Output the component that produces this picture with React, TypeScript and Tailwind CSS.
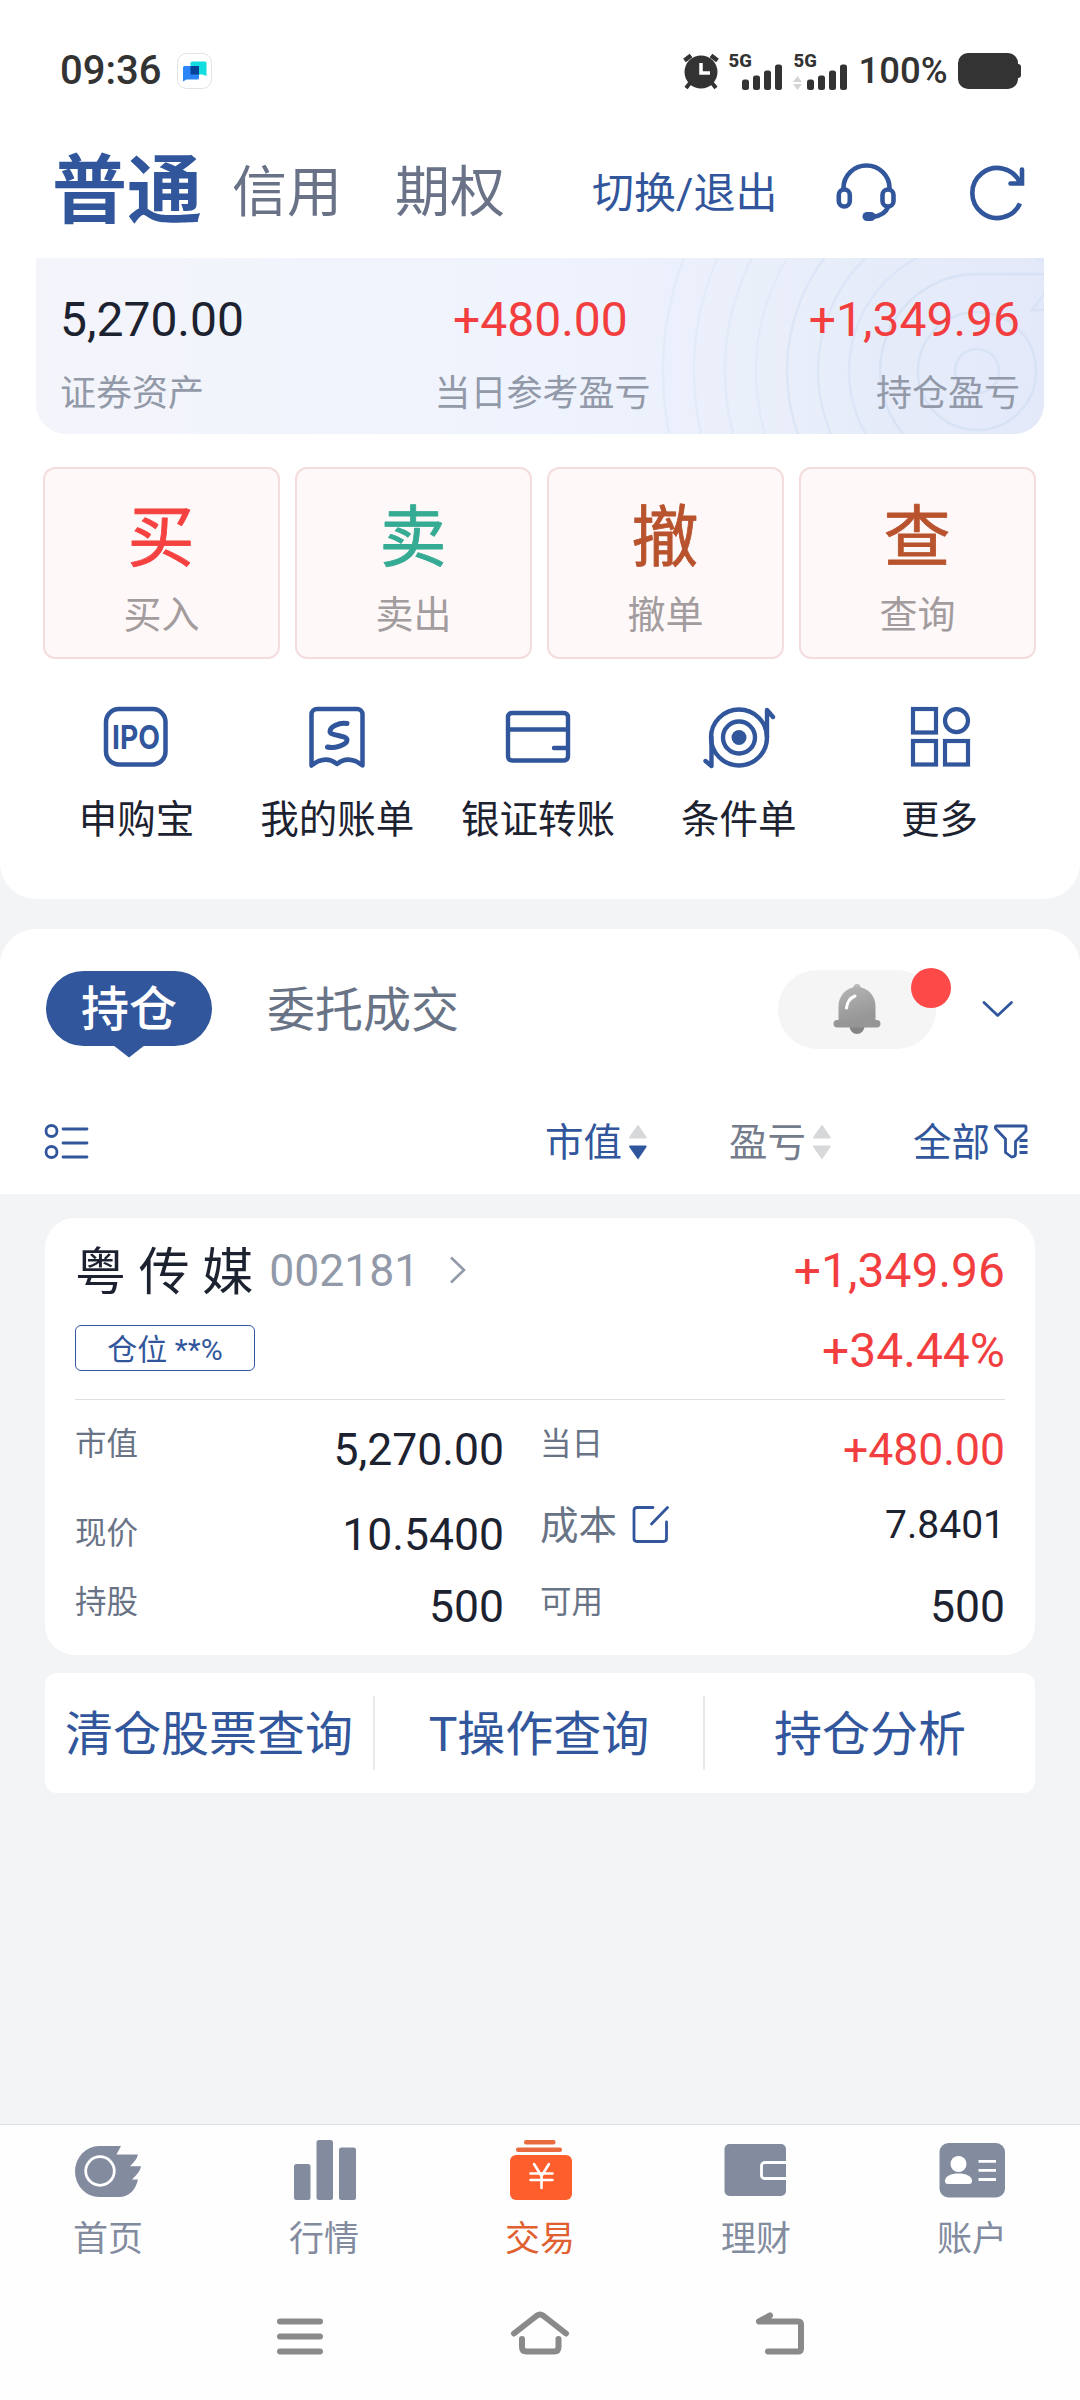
import { ReactNode } from 'react';

const BLUE = '#31569c';

interface Action {
  glyph: string;
  label: string;
  color: string;
}

const actions: Action[] = [
  { glyph: '买', label: '买入', color: '#f5413f' },
  { glyph: '卖', label: '卖出', color: '#35ab93' },
  { glyph: '撤', label: '撤单', color: '#b8532d' },
  { glyph: '查', label: '查询', color: '#b8532d' },
];

const shortcuts = [
  { label: '申购宝', icon: <IpoIcon /> },
  { label: '我的账单', icon: <BillIcon /> },
  { label: '银证转账', icon: <TransferIcon /> },
  { label: '条件单', icon: <TargetIcon /> },
  { label: '更多', icon: <MoreIcon /> },
];

const tabs = [
  { label: '首页', icon: <HomeTabIcon /> },
  { label: '行情', icon: <QuotesTabIcon /> },
  { label: '交易', icon: <TradeTabIcon />, active: true },
  { label: '理财', icon: <WalletTabIcon /> },
  { label: '账户', icon: <AccountTabIcon /> },
];

/* ---------- icons ---------- */

function IpoIcon() {
  return (
    <svg width="72" height="66" viewBox="0 0 72 66">
      <rect x="6" y="6" width="59.500" height="55.500" rx="13" fill="none" stroke={BLUE} strokeWidth="4.500" />
      <text x="36" y="45.500" textAnchor="middle" fontSize="33" fontWeight="700" textLength="48" lengthAdjust="spacingAndGlyphs" fill={BLUE} fontFamily="Inter, sans-serif">IPO</text>
    </svg>
  );
}

function BillIcon() {
  return (
    <svg width="72" height="66" viewBox="0 0 72 66" fill="none" stroke={BLUE} strokeWidth="4.500" strokeLinejoin="round">
      <path d="M10.500 62.500V11.500a5.500 5.500 0 0 1 5.500-5.500h40a5.500 5.500 0 0 1 5.500 5.500v51q-14-11-25.500-1.500q-11.500-9.500-25.500 1.500z" />
      <path d="M46 20.500C38 19 29 24 29 28.500S46 32 46 37S33 46 26.500 44" strokeWidth="5" strokeLinecap="round" />
    </svg>
  );
}

function TransferIcon() {
  return (
    <svg width="72" height="66" viewBox="0 0 72 66" fill="none" stroke={BLUE} strokeWidth="4.400" strokeLinecap="round">
      <rect x="6" y="10" width="60" height="47.500" rx="4" />
      <path d="M6 26.500h60M52 45h14" />
    </svg>
  );
}

function TargetIcon() {
  return (
    <svg width="76" height="68" viewBox="0 0 76 68" className="-mb-[2px]" fill="none" stroke={BLUE} strokeWidth="4.400" strokeLinecap="round" strokeLinejoin="round">
      <circle cx="38" cy="34.500" r="28" />
      <circle cx="38" cy="34.500" r="16" />
      <circle cx="38" cy="34.500" r="7.500" fill={BLUE} stroke="none" />
      <path d="M66 34V7l6 7M10.500 34v29l-6-5" />
    </svg>
  );
}

function MoreIcon() {
  return (
    <svg width="72" height="66" viewBox="0 0 72 66" fill="none" stroke={BLUE} strokeWidth="4.200">
      <rect x="9" y="6" width="23" height="23.500" />
      <circle cx="52.500" cy="17.700" r="11.500" />
      <rect x="9" y="38" width="23" height="23.500" />
      <rect x="41" y="38" width="23" height="23.500" />
    </svg>
  );
}

function HomeTabIcon() {
  return (
    <svg width="72" height="64" viewBox="0 0 72 64" fill="#838b9e">
      <path d="M27 7H49L44.500 15.500H66C65 20 62 23 58 27.200H69C68 33 64 36 60 40.500H66C63.500 51 57 58 47 58H27A24 25.500 0 0 1 27 7z" />
      <circle cx="28" cy="32" r="14.300" fill="none" stroke="#fff" strokeWidth="2.800" />
    </svg>
  );
}

function QuotesTabIcon() {
  return (
    <svg width="72" height="64" viewBox="0 0 72 64" fill="#838b9e">
      <rect x="6" y="25" width="16.500" height="36" rx="2.500" />
      <rect x="28.500" y="1" width="16.500" height="60" rx="2.500" />
      <rect x="51" y="8.500" width="17" height="52.500" rx="2.500" />
    </svg>
  );
}

function TradeTabIcon() {
  return (
    <svg width="72" height="64" viewBox="0 0 72 64" fill="#fe5e2b">
      <rect x="20" y="1" width="31.500" height="4.500" rx="2" fill="#ea6a40" />
      <rect x="12" y="8.500" width="46" height="4.500" rx="2" fill="#ea6a40" />
      <rect x="6" y="16" width="62" height="45" rx="6" />
      <path d="M30 25l7.500 12L45 25M37.500 37v12M26.500 34.500h22M26.500 41h22" fill="none" stroke="#fff" strokeWidth="2.600" strokeLinecap="round" />
    </svg>
  );
}

function WalletTabIcon() {
  return (
    <svg width="72" height="64" viewBox="0 0 72 64">
      <rect x="4.500" y="5" width="61.500" height="52" rx="5" fill="#838b9e" />
      <path d="M67 23.500H44.500a3 3 0 0 0-3 3v10a3 3 0 0 0 3 3H67" fill="none" stroke="#fff" strokeWidth="2.800" />
    </svg>
  );
}

function AccountTabIcon() {
  return (
    <svg width="72" height="64" viewBox="0 0 72 64">
      <rect x="3.500" y="4" width="65.500" height="54.500" rx="9" fill="#838b9e" />
      <circle cx="22.500" cy="25" r="8" fill="#fff" />
      <path d="M9 42c0-5 6-7.500 13.500-7.500S36 37 36 42q0 3-3 3H12q-3 0-3-3z" fill="#fff" />
      <path d="M42.500 22.300H60M42.500 31.300H60M42.500 40.500H60" stroke="#fff" strokeWidth="2.800" />
    </svg>
  );
}

function SortArrows({ active = false }: { active?: boolean }) {
  return (
    <svg className="ml-[6px]" width="20" height="36" viewBox="0 0 20 36">
      <path d="M10 0.500L18.500 13q.5 1.500-.8 1.500H2q-1.300 0-.8-1.500z" fill="#d7d8da" />
      <path d="M10 35.500L18.500 23q.5-1.500-.8-1.500H2q-1.300 0-.8 1.500z" fill={active ? '#2f559d' : '#d7d8da'} />
    </svg>
  );
}

function SignalBars() {
  return (
    <svg width="41" height="26" viewBox="0 0 41 26" fill="#333">
      <rect x="0" y="15.500" width="7" height="10.500" rx="2.500" />
      <rect x="11" y="11.500" width="7" height="14.500" rx="2.500" />
      <rect x="22" y="6.500" width="7" height="19.500" rx="2.500" />
      <rect x="33" y="0.500" width="7" height="25.500" rx="2.500" />
    </svg>
  );
}

/* ---------- sections ---------- */

function StatusBar() {
  return (
    <div className="flex h-[142px] items-center pl-[60px] text-[#333]">
      <span className="text-[40px] leading-none font-medium">09:36</span>
      <svg className="ml-4" width="36" height="36" viewBox="0 0 36 36">
        <rect x="0.500" y="0.500" width="34" height="35" rx="9" fill="#fff" stroke="#e3e3e5" />
        <path d="M15 8.500h13a1.500 1.500 0 0 1 1.500 1.500v13l-4-1.500H15a1.500 1.500 0 0 1-1.500-1.500V10a1.500 1.500 0 0 1 1.500-1.500z" fill="#12dde0" />
        <path d="M7.500 13h13a1.500 1.500 0 0 1 1.500 1.500V25a1.500 1.500 0 0 1-1.500 1.500h-11l-3.500 2V14.500A1.500 1.500 0 0 1 7.500 13z" fill="#2a86f8" />
        <rect x="13.500" y="13" width="8.500" height="8.500" fill="#044299" />
      </svg>

      <svg className="ml-[469px]" width="38" height="38" viewBox="0 0 38 38" fill="none" stroke="#333">
        <circle cx="19" cy="20" r="16.500" fill="#333" stroke="none" />
        <path d="M2.500 8.500L9 3.500M35.500 8.500L29 3.500" strokeWidth="4.500" />
        <path d="M8 31l-4 5M30 31l4 5" strokeWidth="4" />
        <path d="M19 11v10h9" stroke="#fff" strokeWidth="3.500" />
      </svg>
      <div className="ml-[8px] flex h-[37px] flex-col">
        <span className="text-[18.500px] leading-[16px] font-extrabold">5G</span>
        <div className="-mt-[5px] ml-[14px]"><SignalBars /></div>
      </div>
      <div className="ml-[10px] flex h-[37px] flex-col">
        <span className="text-[18.500px] leading-[16px] font-extrabold">5G</span>
        <div className="-mt-[5px] flex items-end gap-[5px]">
          <svg width="9" height="14" viewBox="0 0 9 14" fill="#d4d4d4">
            <path d="M4.500 0L9 6H0zM4.500 14L9 8H0z" />
          </svg>
          <SignalBars />
        </div>
      </div>
      <span className="ml-[10px] text-[36.500px] leading-none font-medium">100%</span>
      <div className="ml-[10px] h-9 w-[60px] rounded-[10px] bg-[#333]" />
      <div className="h-[14px] w-[3px] rounded-r-[3px] bg-[#333]" />
    </div>
  );
}

function AccountHeader() {
  return (
    <header className="flex h-[116px] items-center pr-[53px] pb-[17px] pl-[52px]">
      <span className="text-[75px] leading-none font-bold text-[#31569c]">普通</span>
      <span className="ml-[30px] pt-[2px] text-[55px] leading-none text-[#697287]">信用</span>
      <span className="ml-[53px] pt-[2px] text-[55px] leading-none text-[#697287]">期权</span>
      <span className="ml-[87px] pt-1 text-[42px] leading-none whitespace-nowrap text-[#31569c]">切换/退出</span>
      <svg className="ml-auto shrink-0" width="62" height="62" viewBox="0 0 62 62" fill="none" stroke={BLUE} strokeWidth="4.600">
        <path d="M8.500 28.500V27a23 22.500 0 0 1 46 0v1.500" />
        <rect x="3.800" y="28.500" width="11" height="17" rx="5.500" />
        <rect x="47.500" y="28.500" width="11" height="17" rx="5.500" />
        <path d="M53 46c-2 6-7 8.500-15 10" />
        <rect x="27.500" y="51" width="13" height="9" rx="4.500" fill={BLUE} stroke="none" />
      </svg>
      <svg className="ml-[73px] shrink-0" width="57" height="60" viewBox="0 0 57 60" fill="none" stroke={BLUE} strokeWidth="4.600">
        <path d="M50 41.500A25 25 0 1 1 50 20.500" />
        <path d="M52 7.500V21.500H40.500" strokeLinecap="round" />
      </svg>
    </header>
  );
}

function AssetCard() {
  return (
    <section className="relative mx-9 h-44 overflow-hidden rounded-b-[30px] bg-gradient-to-r from-[#f4f5fb] via-[#eff3fd] to-[#e3e9f9]">
      <svg className="absolute inset-0" width="1008" height="176" viewBox="0 0 1008 176" fill="none" stroke="#d8e3f6" strokeWidth="2.500">
        <circle cx="941" cy="113" r="22" />
        <circle cx="941" cy="113" r="59" />
        <path d="M1008 16H941a97 97 0 0 0-70 164" />
        <path d="M1010 34l-14 18h14" />
        <g opacity="0.700">
          <circle cx="941" cy="113" r="128" />
          <circle cx="941" cy="113" r="159" />
          <circle cx="941" cy="113" r="190" />
        </g>
        <g opacity="0.400">
          <circle cx="941" cy="113" r="221" />
          <circle cx="941" cy="113" r="252" />
          <circle cx="941" cy="113" r="283" />
          <circle cx="941" cy="113" r="314" />
        </g>
      </svg>
      <div className="relative flex justify-between px-6 pt-[38px]">
        <div>
          <div className="text-5xl leading-[48px] text-[#1d2230]">5,270.00</div>
          <div className="mt-[32px] text-[36px] leading-9 text-[#9299a8]">证券资产</div>
        </div>
        <div className="ml-[32px] text-center">
          <div className="pr-1 text-5xl leading-[48px] text-[#f23e3f]">+480.00</div>
          <div className="mt-[32px] text-[36px] leading-9 text-[#9299a8]">当日参考盈亏</div>
        </div>
        <div className="text-right">
          <div className="text-5xl leading-[48px] text-[#f23e3f]">+1,349.96</div>
          <div className="mt-[32px] text-[36px] leading-9 text-[#9299a8]">持仓盈亏</div>
        </div>
      </div>
    </section>
  );
}

function ActionButtons() {
  return (
    <div className="mr-[44px] ml-[43px] mt-[33px] grid grid-cols-4 gap-[15px]">
      {actions.map((action) => (
        <button key={action.label} className="flex h-48 flex-col items-center rounded-xl border-2 border-[#f5dcdd] bg-[#fef8f8]">
          <svg className="mt-[28px] mr-[2px]" width="80" height="80" viewBox="0 0 80 80">
            <text
              x="40"
              y="64"
              textAnchor="middle"
              fontSize="67"
              fill={action.color}
              stroke={action.color}
              strokeWidth="0.800"
              strokeLinejoin="round"
              strokeLinecap="round"
            >
              {action.glyph}
            </text>
          </svg>
          <span className="mt-[18px] text-[38px] leading-[40px] text-[#a39c9e]">{action.label}</span>
        </button>
      ))}
    </div>
  );
}

function Shortcuts() {
  return (
    <div className="mr-[40px] ml-[36px] mt-[44px] grid grid-cols-5">
      {shortcuts.map((item) => (
        <div key={item.label} className="flex flex-col items-center">
          {item.icon}
          <span className="mt-[31px] text-[38.500px] leading-[40px] whitespace-nowrap text-[#1d2230]">{item.label}</span>
        </div>
      ))}
    </div>
  );
}

function PositionTabs() {
  return (
    <section className="mt-[30px] h-[265px] rounded-t-[36px] bg-white pt-[41px]">
      <div className="flex h-[78px] items-center pr-[66px] pl-[46px]">
        <div className="relative mb-[2px] flex h-[75px] w-[166px] items-center justify-center rounded-full bg-[#31569c] pt-[3px] text-5xl font-medium text-white">
          持仓
          <svg className="absolute top-[74px] left-[67px]" width="32" height="13" viewBox="0 0 32 13" fill={BLUE}>
            <path d="M0 0h32L16 12.500z" />
          </svg>
        </div>
        <span className="ml-[55px] pt-[3px] text-[48px] leading-none text-[#697386]">委托成交</span>
        <div className="relative ml-auto flex h-[79px] w-[158px] items-center justify-center rounded-full bg-[#f5f5f6]">
          <svg className="mr-[1px]" width="50" height="54" viewBox="0 0 50 54">
            <defs>
              <linearGradient id="bell" x1="0" y1="0" x2="0.300" y2="1">
                <stop offset="0" stopColor="#b4b4b4" />
                <stop offset="1" stopColor="#969696" />
              </linearGradient>
            </defs>
            <circle cx="25" cy="5.500" r="3.500" fill="#b9b9b9" />
            <circle cx="25" cy="44.500" r="7.500" fill="#858585" />
            <path d="M6.500 40.500V24a18.500 19 0 0 1 37 0v16.500z" fill="url(#bell)" />
            <rect x="1.500" y="38" width="47" height="7.500" rx="3.700" fill="#969696" />
            <path d="M14.500 26q1-9 8.500-12" fill="none" stroke="#fff" strokeWidth="3" strokeLinecap="round" />
          </svg>
          <div className="absolute -top-[2px] right-[-15px] size-10 rounded-full bg-[#fd4948]" />
        </div>
        <svg className="ml-[45px]" width="33" height="20" viewBox="0 0 33 20" fill="none" stroke={BLUE} strokeWidth="2.800" strokeLinecap="round" strokeLinejoin="round">
          <path d="M3 3.500l13.700 13L30.500 3.500" />
        </svg>
      </div>

      <div className="mt-[74px] flex h-10 items-center pr-[51px] pl-[44px] text-[38.500px] leading-none text-[#31569c]">
        <svg width="46" height="38" viewBox="0 0 46 38" fill="none" stroke={BLUE} strokeWidth="2.800" strokeLinecap="round">
          <circle cx="7.500" cy="8" r="5.500" />
          <circle cx="7.500" cy="29" r="5.500" />
          <path d="M19 6h24M19 20h24M19 34h24" />
        </svg>
        <span className="ml-[455px] pt-[3px]">市值</span>
        <SortArrows active />
        <span className="ml-[81px] pt-[3px] text-[#747b8a]">盈亏</span>
        <SortArrows />
        <span className="ml-auto pt-[3px]">全部</span>
        <svg className="ml-[3px] shrink-0" width="36" height="38" viewBox="0 0 36 38" fill="none" stroke={BLUE} strokeWidth="2.800" strokeLinejoin="round">
          <path d="M22.500 18.500L33 8V4q0-1-1-1H3.500q-1.500 0-1 2.500L12.500 16v13.500l6 4.500q4 0 4-3z" />
          <path d="M26.500 17.500h8M26.500 23.500h8M26.500 29.500h8" />
        </svg>
      </div>
    </section>
  );
}

interface CellProps {
  label: ReactNode;
  value: string;
  labelClass?: string;
  valueClass?: string;
}

function Cell({ label, value, labelClass = 'pb-[10px] text-[31.500px]', valueClass = 'text-[44.500px] text-[#1d2230]' }: CellProps) {
  return (
    <div className="flex items-center justify-between">
      <span className={`flex items-center leading-none text-[#697386] ${labelClass}`}>{label}</span>
      <span className={`leading-none ${valueClass}`}>{value}</span>
    </div>
  );
}

function HoldingCard() {
  return (
    <section className="mx-[45px] mt-6 h-[437px] rounded-[30px] bg-white px-[30px] pt-[17px]">
      <div className="flex h-[72px] items-center">
        <span className="pt-[2px] text-[51px] leading-none text-[#1d2230]">粤 传 媒</span>
        <span className="ml-[16px] text-[44.500px] leading-none text-[#9299a8]">002181</span>
        <svg className="mb-[2px] ml-[29px]" width="20" height="30" viewBox="0 0 20 30" fill="none" stroke="#9299a8" strokeWidth="2.600">
          <path d="M3 2.500L16 15 3 27.500" />
        </svg>
        <span className="ml-auto text-5xl leading-none text-[#f23e3f]">+1,349.96</span>
      </div>
      <div className="mt-[9px] flex h-[70px] items-center">
        <span className="mb-[6px] flex h-[46px] w-[180px] items-center justify-center rounded-md border border-[#31569c] pt-[3px] text-[30px] leading-none text-[#31569c]">仓位 **%</span>
        <span className="ml-auto text-5xl leading-none text-[#f23e3f]">+34.44%</span>
      </div>
      <div className="mt-[13px] h-px bg-[#dedfe2]" />
      <div className="grid grid-cols-[429px_465px] grid-rows-[84px_78px_75px] gap-x-[36px] pt-[8px]">
        <Cell label="市值" value="5,270.00" />
        <Cell label="当日" value="+480.00" valueClass="text-[44.500px] text-[#f23e3f]" />
        <Cell label="现价" value="10.5400" labelClass="pt-[5px] text-[31.500px]" valueClass="pt-2 text-[44.500px] text-[#1d2230]" />
        <Cell
          label={
            <>
              成本
              <svg className="mb-[4px] ml-[14px]" width="40" height="40" viewBox="0 0 40 40" fill="none" stroke={BLUE} strokeWidth="2.800" strokeLinecap="round">
                <path d="M22 3.500H6Q3 3.500 3 6.500V34.500q0 3 3 3H32.500q3 0 3-3V18" />
                <path d="M20.500 20L36.500 3.500" />
              </svg>
            </>
          }
          value="7.8401"
          labelClass="pb-[10px] text-[38.500px]"
          valueClass="pb-[11px] text-[39px] text-[#1d2230]"
        />
        <Cell label="持股" value="500" />
        <Cell label="可用" value="500" />
      </div>
    </section>
  );
}

function QueryLinks() {
  return (
    <div className="mx-[45px] mt-[18px] grid h-[120px] grid-cols-3 items-center divide-x-2 divide-[#e8e9ec] rounded-xl bg-white text-center text-[48px] whitespace-nowrap text-[#31569c]">
      {['清仓股票查询', 'T操作查询', '持仓分析'].map((text) => (
        <div key={text} className="h-[74px] leading-[77px]">{text}</div>
      ))}
    </div>
  );
}

function TabBar() {
  return (
    <nav className="grid h-[150px] grid-cols-5 border-t border-[#dcdee2] pt-[14px]">
      {tabs.map((tab) => (
        <div key={tab.label} className="flex flex-col items-center">
          {tab.icon}
          <span className={`mt-[19px] text-[35px] leading-[36px] ${tab.active ? 'text-[#e0602f]' : 'text-[#838b9e]'}`}>{tab.label}</span>
        </div>
      ))}
    </nav>
  );
}

function SystemNav() {
  return (
    <div className="flex flex-1 items-start pt-[36px] pl-[274px]">
      <svg width="52" height="50" viewBox="0 0 52 50" fill="none" stroke="#8a8a8a" strokeWidth="6" strokeLinecap="round">
        <path d="M6 11.500h40M6 26.500h40M6 41.500h40" />
      </svg>
      <svg className="ml-[184px]" width="60" height="50" viewBox="0 0 60 50" fill="none" stroke="#8a8a8a" strokeWidth="6" strokeLinecap="round" strokeLinejoin="round">
        <path d="M4 23.500L27 5.500q3-2 6 0L56 23.500M12 29v8q0 4.500 4.500 4.500h27.500q4.500 0 4.500-4.500v-8" />
      </svg>
      <svg className="ml-[184px]" width="54" height="50" viewBox="0 0 54 50" fill="none" stroke="#8a8a8a" strokeWidth="6" strokeLinecap="round" strokeLinejoin="round">
        <path d="M16 5.500L5 11.500H44q3 0 3 3V38.500q0 3-3 3H14" />
      </svg>
    </div>
  );
}

export default function App() {
  return (
    <div className="flex h-[2400px] w-[1080px] flex-col overflow-hidden bg-[#f3f4f6] font-['Roboto','Noto_Sans_CJK_SC',sans-serif]">
      <div className="h-[899px] rounded-b-[36px] bg-white">
        <StatusBar />
        <AccountHeader />
        <AssetCard />
        <ActionButtons />
        <Shortcuts />
      </div>
      <PositionTabs />
      <HoldingCard />
      <QueryLinks />
      <div className="mt-auto flex h-[276px] flex-col bg-[#fefefe]">
        <TabBar />
        <SystemNav />
      </div>
    </div>
  );
}
